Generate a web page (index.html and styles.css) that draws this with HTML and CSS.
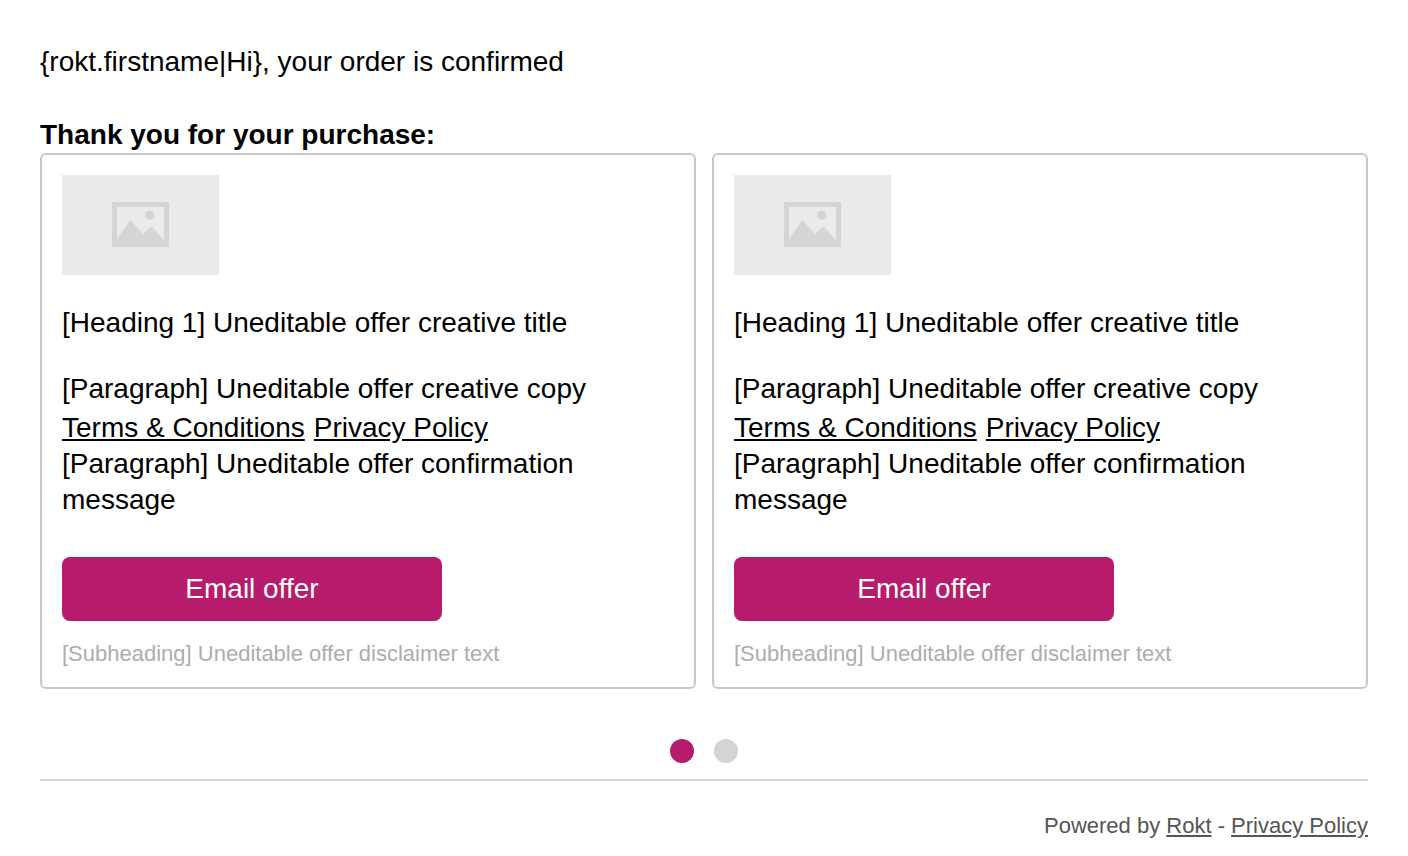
FILE: index.html
```html
<!DOCTYPE html>
<html lang="en">
<head>
    <meta charset="UTF-8">
    <meta name="viewport" content="width=device-width, initial-scale=1.0">
    <title>Order confirmed</title>
    <link rel="stylesheet" href="styles.css">
</head>
<body>
    <main class="placement">
        <p class="confirmation">{rokt.firstname|Hi}, your order is confirmed</p>
        <h1 class="title">Thank you for your purchase:</h1>

        <div class="offers">
            <article class="offer">
                <div class="offer-image">
                    <svg width="57" height="45" viewBox="0 0 57 45" aria-hidden="true">
                        <path fill="#d5d5d5" fill-rule="evenodd" d="M0 0h57v45H0zM5 5v35h47V5z"/>
                        <path fill="#d5d5d5" d="M5 37L18.5 18L31 32L39.5 24.5L52 38V41H5z"/>
                        <circle fill="#d5d5d5" cx="37.7" cy="13.4" r="4.6"/>
                    </svg>
                </div>
                <h2 class="offer-title">[Heading 1] Uneditable offer creative title</h2>
                <p class="offer-copy">[Paragraph] Uneditable offer creative copy</p>
                <p class="offer-links"><a href="#terms">Terms &amp; Conditions</a><a href="#privacy">Privacy Policy</a></p>
                <p class="offer-message">[Paragraph] Uneditable offer confirmation message</p>
                <button type="button" class="offer-btn">Email offer</button>
                <p class="disclaimer">[Subheading] Uneditable offer disclaimer text</p>
            </article>

            <article class="offer">
                <div class="offer-image">
                    <svg width="57" height="45" viewBox="0 0 57 45" aria-hidden="true">
                        <path fill="#d5d5d5" fill-rule="evenodd" d="M0 0h57v45H0zM5 5v35h47V5z"/>
                        <path fill="#d5d5d5" d="M5 37L18.5 18L31 32L39.5 24.5L52 38V41H5z"/>
                        <circle fill="#d5d5d5" cx="37.7" cy="13.4" r="4.6"/>
                    </svg>
                </div>
                <h2 class="offer-title">[Heading 1] Uneditable offer creative title</h2>
                <p class="offer-copy">[Paragraph] Uneditable offer creative copy</p>
                <p class="offer-links"><a href="#terms">Terms &amp; Conditions</a><a href="#privacy">Privacy Policy</a></p>
                <p class="offer-message">[Paragraph] Uneditable offer confirmation message</p>
                <button type="button" class="offer-btn">Email offer</button>
                <p class="disclaimer">[Subheading] Uneditable offer disclaimer text</p>
            </article>
        </div>

        <div class="dots">
            <button type="button" class="dot active" aria-label="Page 1"></button>
            <button type="button" class="dot" aria-label="Page 2"></button>
        </div>

        <footer>Powered by <a href="#rokt">Rokt</a> - <a href="#policy">Privacy Policy</a></footer>
    </main>
</body>
</html>
```
FILE: styles.css
```css
* {
    box-sizing: border-box;
}
body {
    margin: 0;
    background-color: #fff;
    color: #000;
    font-family: "Liberation Sans", Arial, sans-serif;
    font-size: 28px;
    line-height: 36px;
}
h1, h2, p {
    margin: 0;
    font-size: 28px;
    font-weight: normal;
}
a {
    color: inherit;
    text-decoration: underline;
}
.placement {
    padding: 44px 40px 0;
}
.confirmation {
    margin-bottom: 37px;
}
.title {
    font-weight: bold;
}
.offers {
    display: grid;
    grid-template-columns: 1fr 1fr;
    gap: 16px;
}
.offer {
    padding: 20px;
    border: 2px solid #c8c8c8;
    border-radius: 6px;
}
.offer-image {
    display: flex;
    align-items: flex-start;
    justify-content: center;
    width: 157px;
    height: 100px;
    margin-bottom: 30px;
    padding-top: 27px;
    background-color: #ebebeb;
}
.offer-title {
    margin-bottom: 30px;
}
.offer-links {
    display: flex;
    gap: 9px;
    padding-top: 3px;
}
.offer-btn {
    display: block;
    width: 380px;
    max-width: 100%;
    height: 64px;
    margin: 39px 0 20px;
    border: none;
    border-radius: 8px;
    background-color: #b61c6b;
    color: #fff;
    font: inherit;
    cursor: pointer;
}
.disclaimer {
    color: #adadad;
    font-size: 22px;
    line-height: 26px;
}
.dots {
    display: flex;
    justify-content: center;
    gap: 20px;
    padding: 50px 0 16px;
    border-bottom: 2px solid #d6d6d6;
}
.dot {
    width: 24px;
    height: 24px;
    padding: 0;
    border: none;
    border-radius: 50%;
    background-color: #d4d4d4;
    cursor: pointer;
}
.dot.active {
    background-color: #b61c6b;
}
footer {
    padding: 32px 0;
    color: #555;
    font-size: 22px;
    line-height: 26px;
    text-align: right;
}
```
